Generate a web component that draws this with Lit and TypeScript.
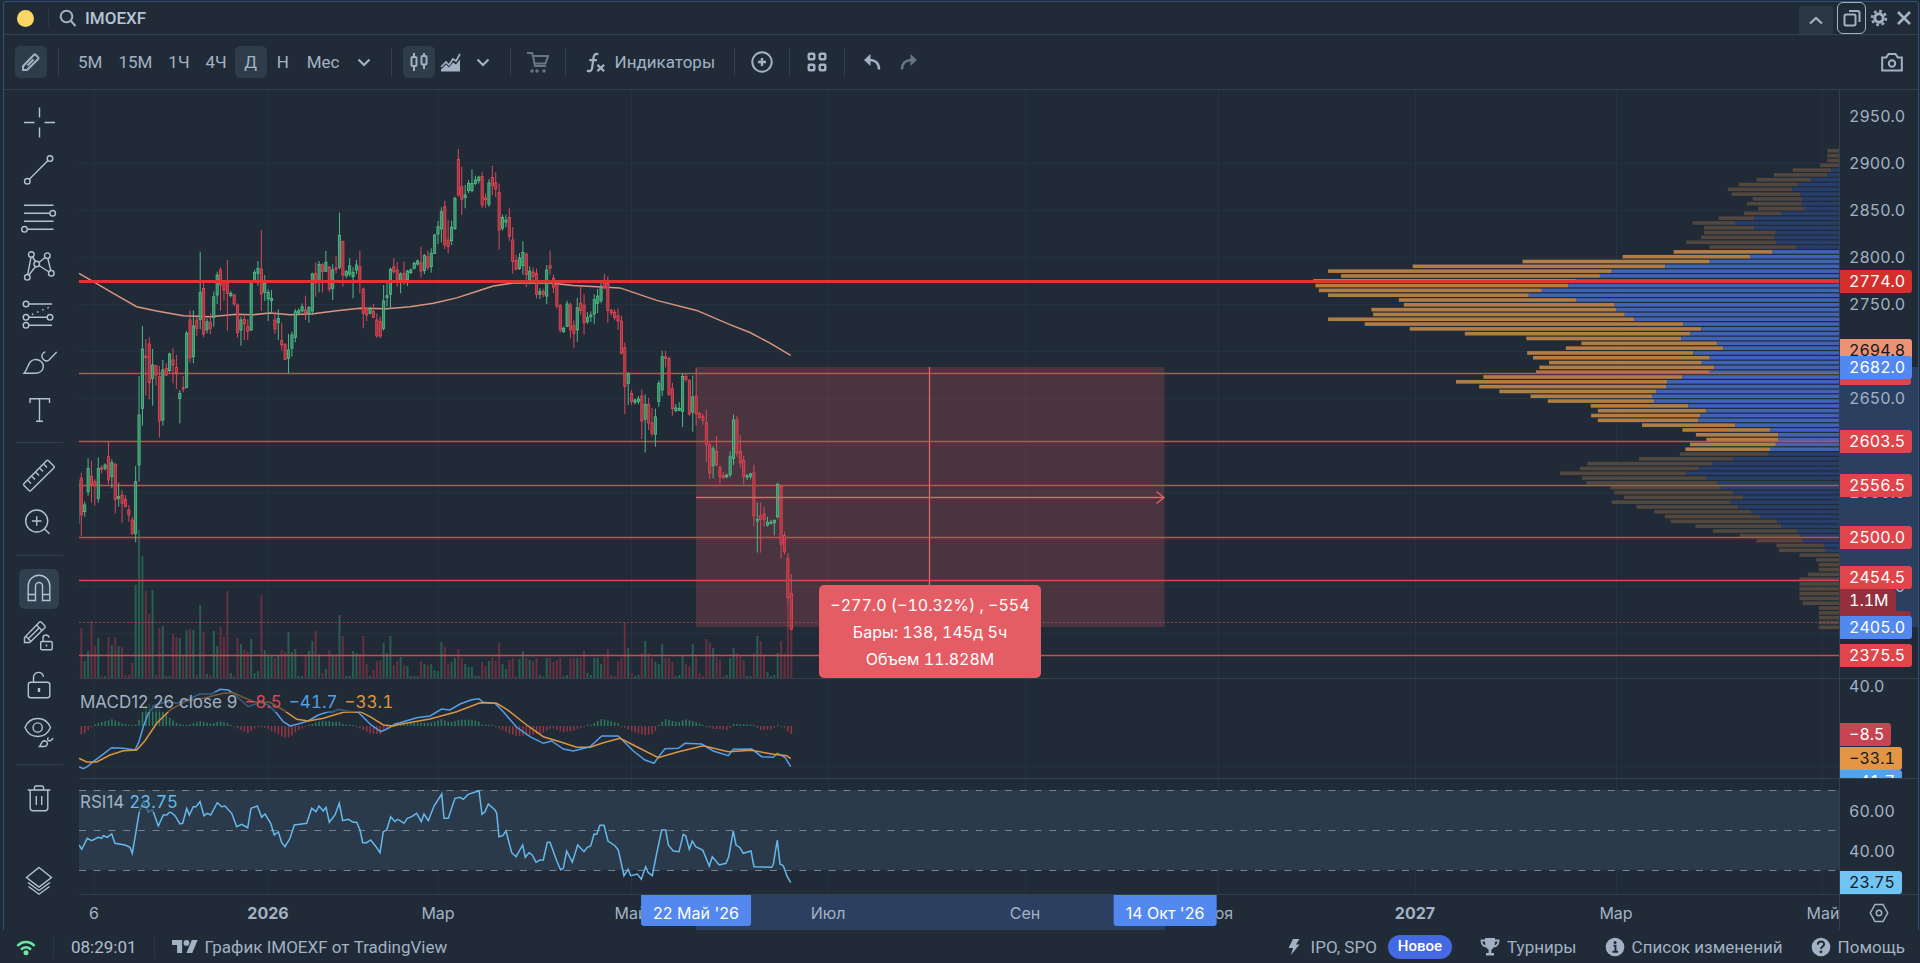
import { LitElement, html, svg, css, nothing } from "lit";
import { customElement } from "lit/decorators.js";

type Pt = [number, number];

/* Geometry of the plot: design-space origin and size of each pane. */
const PLOT_X = 79;
const PLOT_W = 1760;
const PRICE_Y = 90;
const PRICE_H = 588;
const MACD_Y = 679;
const MACD_H = 99;
const RSI_Y = 779;
const RSI_H = 115;
const BAR_STEP = 3.397;
const FIRST_BAR = 81.3;
const BASE_Y = 130;

const barX = (i: number) => FIRST_BAR + BAR_STEP * i;

/* wick top, wick bottom, body top, body bottom, direction; thirds of a pixel below BASE_Y */
const EARLY = `1050,1185,1052,1180,g 1028,1218,1045,1155,r 1115,1160,1125,1145,g 985,1097,1015,1085,g 992,1118,1038,1065,r
1048,1127,1055,1068,r 982,1118,1015,1105,g 1005,1030,1013,1018,r 1000,1022,1005,1015,g 935,1062,980,1050,r 988,1075,998,1040,g
998,1150,1003,1108,r 1058,1130,1100,1105,g 1080,1178,1095,1120,r 1095,1132,1108,1130,r 1125,1175,1140,1155,r 1160,1215,1170,1210,r
1008,1237,1055,1210,g 738,1055,855,1005,g 588,887,657,835,g 627,797,678,683,r 622,808,642,758,r 657,827,705,745,g 705,767,707,735,r
708,922,740,873,r 690,887,720,870,g 700,738,715,735,r 668,727,672,722,g 655,760,690,706,r 675,777,712,728,r 780,880,790,806,g
738,787,773,777,r 603,775,610,772,g 541,698,570,683,r 541,700,588,680,g 560,618,570,595,r 365,598,487,568,g 452,622,475,612,r
565,610,575,600,g 550,612,578,595,r 485,590,500,563,g 425,522,435,495,g 412,542,420,465,r 450,512,455,480,r 390,602,458,490,r
483,502,490,497,g 492,528,495,522,r 520,623,525,608,r 560,647,570,600,g 553,630,568,582,r 568,630,590,604,r 450,603,457,600,g
420,455,427,452,g 393,467,415,430,g 300,543,417,492,r 435,513,460,487,g 478,573,487,507,g 480,547,505,512,g 545,612,570,597,r
538,630,565,578,g 578,662,632,645,r 640,690,643,688,r 612,730,660,685,g 605,680,615,655,g 537,637,545,622,g 535,553,542,548,g
520,548,530,543,g 497,570,540,548,r 528,578,533,550,g 428,555,432,543,g 397,500,430,458,r 393,487,403,455,g 400,487,404,425,r
363,425,397,424,g 407,485,412,477,r 403,510,420,475,g 378,430,414,418,r 248,418,316,412,g 332,470,334,435,r 420,445,425,437,g
384,440,408,432,g 412,505,427,440,g 390,432,405,420,g 363,490,410,458,r 473,595,477,550,r 532,573,536,555,r 530,553,535,550,g
522,565,545,562,r 550,623,570,618,r 560,625,575,618,r 465,602,513,595,g 455,530,497,503,g 413,537,418,493,g 384,432,410,425,r
397,470,420,455,r 427,490,432,458,g 395,465,430,450,r 420,468,423,450,g 415,432,420,428,g 395,418,400,415,g 388,407,393,402,g
350,443,398,423,r 372,432,377,422,g 362,420,380,412,r 355,428,370,410,g 312,372,315,370,g 273,342,290,312,g 232,337,245,297,g
212,357,230,345,r 270,370,330,350,r 272,345,292,332,g 200,300,205,295,g 57,200,88,195,r 110,255,170,208,r 165,235,195,203,g
150,190,160,182,g`;

/* same fields, 1/2.8 of a pixel below BASE_Y */
const LATE = `110,175,150,170,g 128,155,140,150,g 128,150,132,142,g 118,218,130,210,r 178,218,190,195,r 138,215,148,208,g
100,183,133,155,r 118,188,148,165,r 150,335,175,280,r 237,282,245,275,g 237,272,252,258,g 218,310,245,298,r 272,402,308,368,r
350,393,365,390,r 345,392,358,388,g 312,405,343,380,g 343,440,348,405,r 382,432,395,422,g 385,428,398,410,r 388,472,402,460,r
443,473,452,460,g 445,468,453,460,r 378,488,392,465,g 338,405,380,387,r 405,457,415,440,r 428,500,432,493,r 487,567,492,560,r
550,568,555,565,g 478,552,487,550,g 483,583,490,560,r 533,610,548,570,r 470,593,498,560,g 437,517,485,505,r 460,573,490,540,r
510,543,525,537,g 508,538,518,523,g 460,543,475,515,g 445,513,465,485,g 428,485,440,478,g 403,445,425,443,r 410,540,430,505,r
500,520,505,512,r 502,533,510,525,r 500,560,520,535,r 520,628,535,625,r 595,795,610,718,r 678,770,683,710,g 728,770,738,760,r
752,768,756,763,g 745,768,753,760,g 727,865,745,815,r 740,903,768,810,g 750,840,768,820,r 778,858,820,850,r 780,887,803,852,g
702,775,710,760,g 618,745,635,728,g 618,665,635,640,r 635,745,640,740,r 708,800,725,780,r 767,790,778,785,g 762,787,780,785,g
682,832,690,788,g 683,705,690,698,r 697,800,702,795,r 688,845,747,790,g 665,828,745,795,r 790,807,793,805,r 795,825,803,812,r
783,930,820,880,r 875,977,882,960,r 885,975,893,940,g 857,943,900,937,r 938,990,945,970,r 958,977,968,973,r 962,975,966,971,g
900,972,915,965,g 797,938,812,920,g 800,915,812,905,r 855,945,900,932,r 912,992,925,970,r 963,980,968,972,g 960,978,963,970,g
937,1110,960,1080,r 1043,1183,1090,1095,g 1043,1183,1080,1090,r 1055,1110,1075,1090,r 1083,1110,1098,1107,g 1092,1105,1098,1102,g
1090,1135,1093,1100,g 988,1088,992,1083,g 993,1200,998,1160,r 1125,1188,1135,1180,r 1185,1330,1200,1310,r 1243,1400,1298,1398,r`;

interface Candle { x: number; hi: number; lo: number; top: number; bottom: number; up: boolean }

const parse = (block: string, unit: number, first: number): Candle[] =>
  block.split(/\s+/).map((row, k) => {
    const f = row.split(",");
    const [hi, lo, top, bottom] = f.slice(0, 4).map((v) => BASE_Y + Number(v) / unit);
    return { x: barX(first + k), hi, lo, top, bottom, up: f[4] === "g" };
  });

const CANDLES: Candle[] = [...parse(EARLY, 3, -1), ...parse(LATE, 2.8, 115)];

const VOLUME = [
  50, 50, 17, 27, 57, 32, 40, 2, 2, 41, 33, 41, 32, 31, 3, 3, 15, 93, 148, 122, 87, 64, 88, 3, 50, 52, 2, 2, 44, 41, 40, 22,
  48, 49, 48, 3, 73, 46, 4, 3, 47, 32, 51, 41, 87, 5, 2, 40, 34, 28, 26, 39, 5, 7, 83, 28, 23, 22, 20, 22, 28, 26, 46, 26, 29,
  2, 2, 22, 27, 37, 47, 24, 5, 9, 28, 22, 22, 63, 42, 2, 2, 27, 25, 24, 42, 14, 2, 8, 17, 18, 35, 25, 42, 13, 17, 21, 13, 12,
  2, 2, 2, 17, 14, 13, 14, 8, 7, 36, 31, 14, 16, 20, 29, 20, 14, 11, 11, 2, 2, 16, 12, 17, 20, 17, 35, 14, 9, 18, 20, 2, 19,
  27, 20, 18, 17, 20, 3, 2, 20, 20, 16, 18, 20, 2, 3, 20, 20, 20, 20, 27, 5, 3, 20, 20, 14, 21, 29, 3, 2, 17, 20, 55, 30, 5,
  2, 3, 25, 37, 25, 20, 16, 14, 34, 20, 20, 16, 2, 3, 23, 14, 12, 34, 21, 5, 2, 39, 35, 30, 21, 18, 2, 3, 20, 30, 25, 23, 18,
  2, 2, 25, 42, 37, 23, 6, 2, 3, 25, 37, 25, 73, 84,
];

/* Turns "x,y x,y" pairs into page-space points. */
const pts = (s: string, x0: number, ux: number, y0: number, uy: number): Pt[] =>
  s.trim().split(/\s+/).map((p) => {
    const [x, y] = p.split(",").map(Number);
    return [x0 + x / ux, y0 + y / uy];
  });
const join = (p: Pt[]) => p.map(([x, y]) => `${x.toFixed(1)},${y.toFixed(1)}`).join(" ");

const MA_LINE: Pt[] = [
  ...pts("27,430 75,458 130,490 200,530 260,543 340,557 420,560 500,553 550,554 600,549 660,554 730,551 800,542 870,535 950,536 1020,530 1090,520", 70, 3, 130, 3),
  ...pts("0,481 50,470 100,455 160,437 220,428 330,428 400,435 540,442 650,477 770,505 870,545 930,567 990,597 1052,631", 440, 3, 130, 2.8),
];
const MACD_LINE: Pt[] = [
  ...pts("237,650 250,656 262,650 280,635 300,620 335,593 370,595 405,600 417,575 430,530 445,490 465,465 500,455 530,460 560,450 600,432 635,432 660,418 685,420 700,430 745,470 780,457 805,465 830,490 850,515 870,528 895,522 925,512 955,495 985,485 1000,485 1015,478 1040,483 1075,487 1110,522 1142,545 1165,535 1185,522", 0, 3, 550, 3),
  ...pts("0,158 50,143 90,138 125,117 150,120 180,102 215,89 237,86 250,97 285,100 310,125 350,172 390,200 430,220 455,213 490,237 520,243 570,230 605,198 655,198 700,243 735,270 762,280 780,255 795,236 835,235 855,220 905,222 940,243 985,257 1000,238 1055,237 1085,260 1120,262 1132,250 1155,262 1172,290", 400, 3, 670, 3),
];
const SIGNAL_LINE: Pt[] = [
  ...pts("237,625 260,636 290,636 330,615 370,602 410,600 435,572 470,520 510,480 560,452 610,445 670,430 700,428 760,455 810,457 850,480 890,508 925,513 970,505 1030,487 1080,485 1110,500 1150,525 1180,528", 0, 3, 550, 3),
  ...pts("0,163 90,147 170,125 240,98 290,100 320,118 380,165 430,200 480,215 530,232 570,232 610,218 660,205 700,225 775,263 830,247 910,227 985,245 1055,241 1120,253 1160,257 1172,266", 400, 3, 670, 3),
];
const RSI_LINE: Pt[] = [
  ...pts("237,885 245,898 262,865 275,872 295,862 305,865 310,857 322,862 335,852 345,880 375,885 390,892 397,910 407,850 418,785 430,755 445,785 458,780 475,828 490,795 500,795 510,785 525,797 540,822 548,820 560,775 568,795 580,770 588,770 600,755 612,797 622,790 632,795 652,758 665,770 675,768 695,790 710,830 725,823 743,833 753,775 772,768 785,802 795,792 812,820 823,855 835,845 845,878 855,890 870,865 883,825 905,822 920,820 935,775 948,785 957,768 970,783 978,772 988,817 1005,795 1018,760 1028,812 1045,808 1060,817 1070,817 1080,840 1088,878 1100,878 1112,870 1128,890 1140,908 1150,845 1160,840 1172,800 1185,815 1192,808", 0, 3, 550, 3),
  ...pts("0,452 12,460 22,445 35,440 50,430 64,455 72,432 85,452 102,408 125,372 132,445 145,445 165,385 180,382 190,388 205,373 237,362 246,433 255,425 265,402 285,420 290,430 297,500 308,497 318,483 335,548 348,560 368,525 376,562 387,548 397,555 408,577 420,570 430,570 442,517 450,517 470,572 482,600 490,595 500,543 517,577 533,525 552,545 562,532 572,528 582,493 590,493 600,466 612,466 624,513 645,527 655,540 672,617 684,598 692,617 712,612 724,628 737,590 745,608 757,617 770,550 785,480 797,480 805,525 820,543 837,545 850,493 857,497 868,538 877,513 887,530 908,540 928,588 937,560 958,585 978,580 986,560 1000,483 1008,525 1020,533 1030,550 1053,543 1062,590 1115,592 1120,583 1132,510 1140,582 1150,587 1162,620 1172,638", 400, 3, 670, 3),
];

const at = (line: Pt[], x: number): number => {
  for (let i = 1; i < line.length; i++) {
    const [x1, y1] = line[i];
    if (x <= x1) {
      const [x0, y0] = line[i - 1];
      return y0 + ((y1 - y0) * (x - x0)) / (x1 - x0 || 1);
    }
  }
  return line[line.length - 1][1];
};

/* Volume profile rows: total length and buy part, in units of 1/2.376 px from the right edge. */
const PROFILE: Pt[] = [
  [28, 0], [28, 0], [28, 0], [45, 0], [110, 18], [155, 28], [196, 66], [238, 96], [264, 111], [255, 92], [205, 88], [219, 90],
  [192, 81], [226, 136], [286, 201], [348, 246], [321, 201], [321, 150], [328, 154], [363, 150], [308, 101], [393, 159],
  [514, 211], [752, 307], [1013, 413], [1214, 540], [1183, 568], [1249, 625], [1244, 643], [1236, 706], [1214, 737],
  [1046, 625], [1034, 533], [1111, 529], [1107, 509], [1214, 487], [1127, 370], [1020, 328], [889, 353], [743, 375],
  [612, 290], [649, 275], [741, 346], [727, 307], [689, 326], [712, 296], [720, 307], [845, 372], [910, 408], [855, 411],
  [807, 434], [733, 444], [692, 439], [590, 358], [573, 315], [589, 329], [573, 334], [468, 246], [372, 164], [340, 144],
  [315, 144], [354, 150], [365, 164], [378, 169], [475, 252], [598, 301], [616, 331], [663, 363], [611, 316], [600, 288],
  [543, 281], [534, 251], [511, 228], [540, 259], [481, 239], [439, 208], [414, 188], [400, 146], [341, 136], [300, 99],
  [236, 91], [196, 86], [149, 36], [143, 31], [94, 0], [54, 0], [48, 0], [48, 0], [74, 0], [94, 0], [94, 0], [94, 0], [94, 0],
  [94, 0], [86, 0], [48, 0], [48, 0], [48, 0], [48, 0], [48, 0],
];

const GRID_X = [94, 268, 438, 631, 828, 1025, 1218, 1415, 1616, 1822];
const GRID_Y = [163, 210, 257, 304, 351, 398, 445, 492, 539, 586, 633];
const LEVELS = [373, 441, 485, 537, 580, 655];

interface Tag { y: number; text: string; kind: string }
const TICKS: Tag[] = [
  [116, "2950.0"], [163, "2900.0"], [210, "2850.0"], [257, "2800.0"], [304, "2750.0"], [398, "2650.0"], [492, "2550.0"], [586, "2450.0"],
].map(([y, text]) => ({ y: y as number, text: text as string, kind: "tick" }));
const PRICE_TAGS: Tag[] = [
  { y: 281, text: "2774.0", kind: "crimson" },
  { y: 350, text: "2694.8", kind: "salmon" },
  { y: 373, text: "", kind: "red slip" },
  { y: 367, text: "2682.0", kind: "blue" },
  { y: 441, text: "2603.5", kind: "red" },
  { y: 485, text: "2556.5", kind: "red" },
  { y: 537, text: "2500.0", kind: "red" },
  { y: 577, text: "2454.5", kind: "red" },
  { y: 622, text: "", kind: "maroon slip" },
  { y: 600, text: "1.1M", kind: "maroon" },
  { y: 627, text: "2405.0", kind: "blue" },
  { y: 655, text: "2375.5", kind: "red" },
];
const MACD_TAGS: Tag[] = [
  { y: 686, text: "40.0", kind: "tick" },
  { y: 734, text: "−8.5", kind: "brick" },
  { y: 781, text: "−41.7", kind: "azure" },
  { y: 758, text: "−33.1", kind: "orange" },
];
const RSI_TAGS: Tag[] = [
  { y: 811, text: "60.00", kind: "tick" },
  { y: 851, text: "40.00", kind: "tick" },
  { y: 882, text: "23.75", kind: "sky" },
];

const TIMES: { x: number; text: string; bold?: boolean; chip?: boolean }[] = [
  { x: 94, text: "6" },
  { x: 268, text: "2026", bold: true },
  { x: 438, text: "Мар" },
  { x: 631, text: "Май" },
  { x: 828, text: "Июл" },
  { x: 1025, text: "Сен" },
  { x: 1218, text: "Ноя" },
  { x: 1415, text: "2027", bold: true },
  { x: 1616, text: "Мар" },
  { x: 1823, text: "Май" },
  { x: 696, text: "22 Май '26", chip: true },
  { x: 1165, text: "14 Окт '26", chip: true },
];

const pct = (v: number, from: number, size: number) => `${(((v - from) / size) * 100).toFixed(3)}%`;

/* ---------- icons ---------- */

const tool = (body: unknown) => html`<svg class="ic40" viewBox="0 0 40 40" aria-hidden="true">${body}</svg>`;
const ring = (x: number, y: number) => svg`<circle cx=${x} cy=${y} r="2.8"/>`;

const T = {
  cross: svg`<path d="M20.5 4.5v10M20.5 24.5v10M5 19.5h10.5M25.5 19.5H36"/>`,
  line: svg`<path d="M10.3 28.3 29 9.6"/>${ring(31, 7.6)}${ring(8.3, 30.3)}`,
  fib: svg`<path d="M5 6.3h29.5M5 14.3h26M5 22.3h29.5M8.5 30.3h26"/>${ring(33.7, 14.3)}${ring(5.5, 30.3)}`,
  pattern: svg`<path d="M12 10.2 8.7 27.5M13.5 10l3 4.5M20 15.5l6-5M28.8 11.5l3 12M20 18.5l10 6.5M16.5 19.5l-6.5 8.5"/>
    ${ring(12.3, 7.5)}${ring(28.3, 8.7)}${ring(17.7, 17)}${ring(32.3, 26.3)}${ring(8.3, 30.3)}`,
  forecast: svg`<path d="M10 9h23M10 22.3h18M10 30.3h23"/><path d="M13 19.5 33 11" stroke-dasharray="1.4 4.2" stroke-width="1.6"/>
    ${ring(7, 9)}${ring(7, 22.3)}${ring(31, 22.3)}${ring(7, 30.3)}`,
  brush: svg`<path d="M5 30.3C9.500 26 8.500 17.500 15.500 16.600c5-.5 9 2.500 8.800 7-.2 4.200-3.800 6.700-8.300 6.700z"/>
    <path d="M26.300 8.700c-4 2-4.600 5.600-1.600 8 1.800 1.600 3.800 1.600 5.300.3l7.700-8"/>`,
  text: svg`<path d="M11 12V7.700h19.500V12M20.500 7.700v22.500M17 30.300h7"/>`,
  ruler: svg`<path d="M5 27.500 27.500 4.800q1-1 2 0l5.300 5.200q1 1 0 2L12 34.500q-1 1-2 0L5 29.500q-1-1 0-2zM9 24.500l3 3M13 20.500l3 3M17 16.500l3 3M21 12.500l3 3M25 8.500l3 3"/>`,
  zoom: svg`<circle cx="17.700" cy="17" r="11"/><path d="m25.500 25 5 4.800M17.700 12.200v9.600M12.900 17h9.600"/>`,
  magnet: svg`<path d="M9.200 31.500V17a10.800 10.800 0 0 1 21.600 0v14.500h-7.300V17a3.500 3.500 0 0 0-7 0v14.500zM9.200 25.500h7.300M23.500 25.500h7.300"/>`,
  pencilLock: svg`<path d="M5.500 25.500v-5L20.300 5.300q1-1 2 0l3.500 3.500q1 1 0 2L10.800 25.500zM7 19.500l5 5M17.500 8l5.500 5.500M9.500 21.500 20 11"/>
    <rect x="21.700" y="24.500" width="11.500" height="8.300" rx="1.200"/><path d="M24 24.500v-3.200a3 3 0 0 1 6-.6M27.500 27.500v2"/>`,
  lock: svg`<rect x="9.300" y="17.300" width="21.500" height="15.400" rx="2.500"/><path d="M14.500 17.300v-4.500a5 5 0 0 1 10-.8"/><path d="M20 23v4" stroke-width="2.400"/>`,
  eye: svg`<path d="M6 14.500C11 2.500 26.500 2.500 31.500 14.500 26.500 26.500 11 26.500 6 14.500z"/><circle cx="18.700" cy="14.500" r="4.600"/>
    <path d="M20.500 33.500c2-2 1.500-5.500 4.500-5.700 2.500 0 3.700 1.500 3.300 3.300-.4 1.600-1.600 2.400-3.300 2.400zM29.500 24.500c-1.500 1.300-1 3.300.8 3.500 1.500 0 2.500-1.300 4-2.700"/>`,
  trash: svg`<path d="M8.700 12h22.600M15.500 12V9.500q0-1.500 1.500-1.500h6q1.500 0 1.500 1.500V12M11.200 12v18q0 2.700 2.700 2.700h12.200q2.700 0 2.700-2.700V12M17.300 18v9M22.700 18v9"/>`,
  layers: svg`<path d="m20 6.500 12.500 10L20 26 7.500 16.500zM9 21.500l11 8 11-8M9.500 25.500l10.500 7.700 10.500-7.700"/>`,
};

const I = {
  search: html`<svg class="ic18" viewBox="0 0 18 18"><circle cx="7.500" cy="7.500" r="5.800"/><path d="m12 12 4.500 5"/></svg>`,
  pencil: html`<svg class="ic20" viewBox="0 0 20 20"><path d="M2 18v-3.800L13 2.800q.8-.8 1.600 0l2.600 2.600q.8.800 0 1.600L6 18zM6.500 13.500l6-6"/></svg>`,
  down: html`<svg class="ic16" viewBox="0 0 16 16"><path d="m2.500 5.500 5.500 5.500 5.500-5.500" stroke-width="2.200"/></svg>`,
  up: html`<svg class="ic16" viewBox="0 0 16 16"><path d="M2 11.500 8 6l6 5.500" stroke-width="2.200"/></svg>`,
  candles: html`<svg class="ic20" viewBox="0 0 20 20"><path d="M5 1v4M5 14v5M15 1v3M15 12v5"/><rect x="2.500" y="5" width="5" height="9" rx="1"/><rect x="12.500" y="4" width="5" height="8.500" rx="1"/></svg>`,
  area: html`<svg class="ic21" viewBox="0 0 21 20"><path class="fill" d="M1 19v-2l5-5 3 3 4-5 3 2 4-5v12z"/><path d="m1 14.500 5-5 3 3 4-6 3 2 4-7" stroke-width="1.700"/></svg>`,
  cart: html`<svg class="ic22" viewBox="0 0 22 22"><path d="M0 2h5l1 3 2 10h11M6 5h15l-2.500 7.500H7.500"/><circle class="fill" cx="5" cy="20" r="1.700"/><circle class="fill" cx="10" cy="20" r="1.700"/><circle class="fill" cx="17" cy="20" r="1.700"/></svg>`,
  fx: html`<svg class="ic21" viewBox="0 0 21 22"><path d="M13.500 2.300C9.800 1 8.700 3.500 8.300 6.500L7 16.500c-.4 3-2 4.300-5.500 3M4 8.500h8" stroke-width="2.300"/><path d="m12.500 13.500 7 6.500M19.500 13.500l-7 6.500" stroke-width="2.300"/></svg>`,
  plus: html`<svg class="ic22" viewBox="0 0 22 22"><circle cx="11" cy="11" r="9.700"/><path d="M11 7v8M7 11h8" stroke-width="2.400"/></svg>`,
  grid: html`<svg class="ic20" viewBox="0 0 20 20"><g stroke-width="2.400"><rect x="1.700" y="1.700" width="5.600" height="5.600" rx="1"/><rect x="12.700" y="1.700" width="5.600" height="5.600" rx="1"/><rect x="1.700" y="12.700" width="5.600" height="5.600" rx="1"/><rect x="12.700" y="12.700" width="5.600" height="5.600" rx="1"/></g></svg>`,
  undo: html`<svg class="ic18" viewBox="0 0 18 18"><path class="fill" d="M1 7 7.500 1v12z"/><path d="M6 7c6-.5 10 3 10 9.500" stroke-width="2.500"/></svg>`,
  redo: html`<svg class="ic18" viewBox="0 0 18 18"><path class="fill" d="m17 7-6.500-6v12z"/><path d="M12 7C6 6.500 2 10 2 16.500" stroke-width="2.500"/></svg>`,
  camera: html`<svg class="ic22" viewBox="0 0 22 20"><path d="M1.200 5.500h4L7.500 2h7l2.300 3.500h4V18.500H1.200z"/><circle cx="11" cy="11.500" r="3.200"/></svg>`,
  windows: html`<svg class="ic18" viewBox="0 0 18 18"><rect x="1.500" y="5.500" width="11" height="11" rx="1.500"/><path d="M6 2h8.500q2 0 2 2v9"/></svg>`,
  gear: html`<svg class="ic18" viewBox="0 0 18 18"><circle cx="9" cy="9" r="4.200" stroke-width="3"/><circle cx="9" cy="9" r="7" stroke-width="2.400" stroke-dasharray="2.750 2.750"/></svg>`,
  close: html`<svg class="ic16" viewBox="0 0 16 16"><path d="m2 2 12 12M14 2 2 14" stroke-width="2.600"/></svg>`,
  hex: html`<svg class="ic20 thin" viewBox="0 0 20 20"><path d="M6 1.500h8l4.700 8.500L14 18.500H6L1.300 10z"/><circle cx="10" cy="10" r="2.700"/></svg>`,
  wifi: html`<svg class="ic20 green" viewBox="0 0 20 20"><path d="M1.500 9C6 3.700 14 3.700 18.500 9M5 12.700c2.800-3.200 7.200-3.200 10 0" stroke-width="2.600"/><circle class="fill" cx="10" cy="15.800" r="2.500"/></svg>`,
  tv: html`<svg class="tv" viewBox="0 4 36 18"><path class="fill" d="M14 22H7V11H0V4h14v18zM28 22h-8l7.500-18h8L28 22z"/><circle class="fill" cx="20" cy="8" r="4"/></svg>`,
  bolt: html`<svg class="bolt" viewBox="0 0 12 16"><path class="fill" d="M5 0h6.500L8 5.500h3.500L3 16l2-7H.5z"/></svg>`,
  cup: html`<svg class="ic20" viewBox="0 0 20 20"><path class="fill" d="M5 1h10v4c0 4-1.500 6.500-3.600 7.500V16H14v2.500H6V16h2.600v-3.500C6.500 11.500 5 9 5 5z"/><path d="M5 3.500H1.500C1.500 7 3 9 6 9.500M15 3.500h3.500C18.500 7 17 9 14 9.500" stroke-width="1.800"/></svg>`,
  info: html`<svg class="ic20" viewBox="0 0 20 20"><circle class="fill" cx="10" cy="10" r="9.300"/><path class="dark" d="M8.500 8.700h2v5.800M7.500 14.700h5.500" stroke-width="1.900"/><circle class="hole" cx="10" cy="5.500" r="1.500"/></svg>`,
  help: html`<svg class="ic20" viewBox="0 0 20 20"><circle class="fill" cx="10" cy="10" r="9.300"/><path class="dark" d="M6.800 7.600c.2-4.200 6.600-3.900 6.300-.2-.2 2.200-3 2.200-3 4.600" stroke-width="2"/><circle class="hole" cx="10" cy="14.800" r="1.400"/></svg>`,
};

@customElement("app-root")
export class AppRoot extends LitElement {
  static styles = css`
    :host {
      --bg: #202b37;
      --line: #34414d;
      --text: #a2b2c4;
      display: flex;
      flex-direction: column;
      height: 100vh;
      min-height: 600px;
      box-sizing: border-box;
      overflow: hidden;
      background: var(--bg);
      color: var(--text);
      font: 400 16px/20px Inter, "Liberation Sans", sans-serif;
    }
    * { box-sizing: border-box; }
    button {
      font: inherit;
      color: inherit;
      background: none;
      border: 0;
      padding: 0;
      margin: 0;
      display: inline-flex;
      align-items: center;
      justify-content: center;
      cursor: pointer;
    }
    a { color: inherit; text-decoration: none; display: inline-flex; align-items: center; gap: 7px; }
    svg { display: block; fill: none; stroke: currentColor; stroke-width: 2; flex: none; }
    .fill { fill: currentColor; stroke: none; }
    .dark { stroke: var(--bg); }
    .hole { fill: var(--bg); stroke: none; }
    .ic16 { width: 16px; height: 16px; }
    .ic18 { width: 18px; height: 18px; }
    .ic20 { width: 20px; height: 20px; }
    .ic21 { width: 21px; height: 21px; }
    .ic22 { width: 22px; height: 22px; }
    .ic40 { width: 40px; height: 40px; stroke-width: 1.4; }
    .thin { stroke-width: 1.500; }
    .green { color: #6ee7a0; }
    .tv { width: 26px; height: 13px; }
    .bolt { width: 12px; height: 16px; }

    .window {
      flex: 1;
      min-height: 0;
      margin: 1px 1px 0 3px;
      border: 1px solid #30507f;
      border-bottom: 0;
      border-radius: 4px 4px 0 0;
      display: flex;
      flex-direction: column;
    }
    .head, .toolbar, .status { font-family: Roboto, "Liberation Sans", sans-serif; font-size: 17px; }
    .head {
      height: 33px;
      flex: none;
      border-bottom: 1px solid var(--line);
      display: flex;
      align-items: center;
      padding: 0 2px 0 13px;
    }
    .dot { width: 17px; height: 17px; border-radius: 50%; background: #fbd566; }
    .head .rule { width: 1px; height: 20px; background: #293541; margin: 0 10px 0 14px; }
    .symbol { gap: 8px; font-weight: 500; color: #b7c5d4; }
    .symbol svg { color: var(--text); }
    .winbtns { margin-left: auto; display: flex; align-items: center; height: 100%; }
    .tab { width: 34px; height: 28px; align-self: flex-end; background: #2b3844; border-radius: 3px 3px 0 0; }
    .framed { width: 29px; height: 32px; border: 1px solid #a2b2c4; border-radius: 6px; margin: 0 0 0 4px; }
    .winbtns .plain { width: 25px; height: 28px; }

    .toolbar {
      height: 55px;
      flex: none;
      border-bottom: 1px solid var(--line);
      display: flex;
      align-items: center;
      padding: 0 10px 0 11px;
    }
    .toolbar button { height: 32px; min-width: 32px; border-radius: 5px; }
    .toolbar .txt { padding: 0 8px; }
    .toolbar .on { background: #2f3c49; }
    .toolbar .sq { width: 32px; }
    .toolbar .dim { opacity: 0.55; }
    .toolbar .fx { gap: 9px; padding: 0 8px; }
    .toolbar .gap { margin-left: 5px; }
    .toolbar .last { margin-left: auto; }
    .sep { width: 1px; height: 28px; background: var(--line); margin: 0 11px; }

    .main {
      flex: 1;
      min-height: 0;
      display: grid;
      grid-template-columns: 75px minmax(0, 1fr) 79px;
      grid-template-rows: minmax(0, 589fr) minmax(0, 100fr) minmax(0, 116fr) 35px;
    }
    .tools {
      grid-row: 1 / 5;
      display: flex;
      flex-direction: column;
      align-items: center;
      padding: 9px 5px 25px 0;
      color: #b3c2d2;
      overflow: hidden;
    }
    .tools button { width: 40px; height: 40px; margin: 4px 0; border-radius: 6px; flex: none; }
    .tools .on { background: #31404e; }
    .tools hr { width: 47px; height: 1px; border: 0; background: var(--line); margin: 7px 0 9px; flex: none; }
    .tools .bottom { margin-top: auto; }

    .pane { position: relative; border-bottom: 1px solid var(--line); min-width: 0; }
    .pane > svg { width: 100%; height: 100%; stroke-width: 1; overflow: hidden; }
    .pane, .axis { font-variant-numeric: tabular-nums; }
    .axis { position: relative; border-left: 1px solid var(--line); border-bottom: 1px solid var(--line); overflow: hidden; }
    .axis .range { position: absolute; left: 0; right: 0; background: #2b3f61; }
    .tag {
      position: absolute;
      left: 0;
      height: 23px;
      line-height: 22px;
      margin-top: -11px;
      padding: 0 7px 0 9px;
      border-radius: 0 3px 3px 0;
      color: #fff;
      white-space: nowrap;
    }
    .slip { width: 71px; }
    .tick { color: var(--text); }
    .crimson { background: #d3302c; }
    .red { background: #df464b; }
    .blue { background: #5389ef; }
    .salmon { background: #ed9273; color: #14191f; }
    .maroon { background: #94303c; }
    .brick { background: #c74450; }
    .orange { background: #e39544; color: #14191f; }
    .azure { background: #55a3e4; }
    .sky { background: #70c4f4; color: #14191f; }

    .grid { stroke: #26323e; }
    .gup { stroke: #4db887; }
    .gdn { stroke: #d9485a; }
    .bup { fill: #348c64; stroke: #55c08a; stroke-width: 0.8; }
    .bdn { fill: #a8323f; stroke: #e24b57; stroke-width: 0.8; }
    .vup { fill: #295d50; }
    .vdn { fill: #66303f; }
    .shape { stroke: none; }
    .level { stroke: #d4484f; stroke-width: 1.600; }
    .poc { stroke: #dc3831; stroke-width: 3; }
    .last-price { stroke: #c4405a; stroke-dasharray: 2 2; opacity: 0.8; }
    .ma { stroke: #d99480; stroke-width: 1.500; }
    .buy { fill: #4163b4; }
    .sell { fill: #b17d47; }
    .faded .buy { fill: #283e6a; }
    .faded .sell { fill: #51473e; }
    .measure { fill: #ee5a62; fill-opacity: 0.2; stroke: none; }
    .mline { stroke: #e4626a; stroke-width: 1.300; }
    .macd { stroke: #559fe8; stroke-width: 1.500; }
    .signal { stroke: #dd9440; stroke-width: 1.500; }
    .rsi { stroke: #67b8ea; stroke-width: 1.500; }
    .band { fill: #2a3a4a; stroke: none; }
    .dash { stroke: #75828f; stroke-dasharray: 7 7.700; }

    .legend {
      position: absolute;
      left: 0;
      top: 13px;
      padding: 0 2px 0 1px;
      display: flex;
      gap: 7px;
      font-size: 17px;
      white-space: nowrap;
      background: rgba(32, 43, 55, 0.55);
    }
    .rsi-legend { gap: 5px; background: rgba(42, 58, 74, 0.6); }
    .name { font-variant-numeric: normal; }
    .c-red { color: #d9485a; }
    .c-blue { color: #559fe8; }
    .c-orange { color: #dd9440; }
    .c-sky { color: #67b8ea; }

    .bubble {
      position: absolute;
      transform: translateX(-50%);
      width: 222px;
      padding: 7px 0 5px;
      border-radius: 5px;
      background: #e45d65;
      color: #fff;
      text-align: center;
      line-height: 27px;
      white-space: nowrap;
      z-index: 2;
    }

    .times { position: relative; overflow: hidden; }
    .times .span { position: absolute; top: 0; bottom: 0; background: #2b3f61; }
    .time { position: absolute; top: 0; line-height: 36px; transform: translateX(-50%); white-space: nowrap; }
    .bold { font-weight: 700; }
    .chip { height: 31px; background: #5389ef; color: #fff; padding: 0 12px; border-radius: 0 0 3px 3px; }
    .corner { border-left: 1px solid var(--line); display: flex; align-items: center; justify-content: center; }

    .status {
      height: 33px;
      flex: none;
      display: flex;
      align-items: center;
      padding: 0 15px 0 16px;
      white-space: nowrap;
    }
    .status .rule { width: 1px; height: 22px; background: #2b3743; margin: 0 17px; }
    .status .right { margin-left: auto; display: flex; align-items: center; gap: 28px; }
    .status .ipo { gap: 11px; }
    .pill {
      height: 24px;
      line-height: 23px;
      padding: 0 10px;
      border-radius: 12px;
      background: #4569e2;
      color: #fff;
      font-size: 15px;
      font-weight: 500;
    }
    .clock { color: #b0bfce; }
  `;

  private priceSvg() {
    return html`<svg viewBox="${PLOT_X} ${PRICE_Y} ${PLOT_W} ${PRICE_H}" preserveAspectRatio="none" aria-label="IMOEXF">
      ${GRID_X.map((x) => svg`<path class="grid" d="M${x + 0.5} 90V678"/>`)}
      ${GRID_Y.map((y) => svg`<path class="grid" d="M79 ${y + 0.5}H1839"/>`)}
      ${PROFILE.map(([total, buy], k) => {
        const y = 149 + k * 4.813;
        const t = total / 2.376;
        const b = buy / 2.376;
        return svg`<g class=${k < 21 || k > 62 ? "shape faded" : "shape"}>
          <rect class="sell" x=${1839 - t} y=${y} width=${t - b} height="3.600"/>
          <rect class="buy" x=${1839 - b} y=${y} width=${b} height="3.600"/></g>`;
      })}
      ${VOLUME.map((h, k) => {
        const c = CANDLES[k];
        return svg`<rect class=${c.up ? "shape vup" : "shape vdn"} x=${c.x - 1} y=${678 - h} width="2" height=${h}/>`;
      })}
      <rect class="measure" x="696" y="367" width="468.500" height="260"/>
      ${LEVELS.map((y) => svg`<path class="level" d="M79 ${y + 0.5}H1839"/>`)}
      <path class="last-price" d="M79 622.500H1839"/>
      <polyline class="ma" points=${join(MA_LINE)}/>
      ${CANDLES.map((c) => svg`
        <path class=${c.up ? "gup" : "gdn"} d="M${c.x} ${c.hi}V${c.lo}"/>
        <rect class=${c.up ? "bup" : "bdn"} x=${c.x - 1.1} y=${c.top} width="2.200" height=${Math.max(1, c.bottom - c.top)}/>`)}
      <path class="poc" d="M79 281.500H1839"/>
      <path class="mline" d="M929.500 367V600M696 497.500H1164M1156.500 491.500l7.500 6-7.500 6"/>
    </svg>`;
  }

  private macdSvg() {
    return html`<svg viewBox="${PLOT_X} ${MACD_Y} ${PLOT_W} ${MACD_H}" preserveAspectRatio="none" aria-label="MACD">
      ${GRID_X.map((x) => svg`<path class="grid" d="M${x + 0.5} 679V778"/>`)}
      <path class="grid" d="M79 766.500H1839"/>
      ${CANDLES.map((c) => {
        const d = at(SIGNAL_LINE, c.x) - at(MACD_LINE, c.x);
        const h = Math.max(1.2, Math.abs(d));
        return svg`<rect class="shape" fill=${d >= 0 ? "#2f7a5c" : "#973444"} x=${c.x - 0.7} y=${d >= 0 ? 726 - h : 726} width="1.500" height=${h}/>`;
      })}
      <polyline class="macd" points=${join(MACD_LINE)}/>
      <polyline class="signal" points=${join(SIGNAL_LINE)}/>
    </svg>`;
  }

  private rsiSvg() {
    return html`<svg viewBox="${PLOT_X} ${RSI_Y} ${PLOT_W} ${RSI_H}" preserveAspectRatio="none" aria-label="RSI">
      <rect class="band" x="79" y="790" width="1760" height="80"/>
      ${GRID_X.map((x) => svg`<path class="grid" d="M${x + 0.5} 779V790M${x + 0.5} 870V894"/>`)}
      ${[790, 830, 870].map((y) => svg`<path class="dash" d="M79 ${y + 0.5}H1839"/>`)}
      <polyline class="rsi" points=${join(RSI_LINE)}/>
    </svg>`;
  }

  private tags(list: Tag[], from: number, size: number) {
    return list.map((t) => html`<span class="tag ${t.kind}" style="top:${pct(t.y, from, size)}">${t.text}</span>`);
  }

  private toolButton(label: string, icon: unknown, cls = "") {
    return html`<button class=${cls || nothing} aria-label=${label}>${tool(icon)}</button>`;
  }

  render() {
    return html`
      <section class="window">
        <header class="head">
          <span class="dot"></span><span class="rule"></span>
          <button class="symbol">${I.search}IMOEXF</button>
          <div class="winbtns">
            <button class="tab" aria-label="Свернуть">${I.up}</button>
            <button class="framed" aria-label="Окно">${I.windows}</button>
            <button class="plain" aria-label="Настройки">${I.gear}</button>
            <button class="plain" aria-label="Закрыть">${I.close}</button>
          </div>
        </header>

        <nav class="toolbar">
          <button class="sq on" aria-label="Рисование">${I.pencil}</button>
          <span class="sep"></span>
          ${["5М", "15М", "1Ч", "4Ч", "Д", "Н", "Мес"].map(
            (t) => html`<button class="txt ${t === "Д" ? "on" : ""}">${t}</button>`
          )}
          <button class="sq" aria-label="Интервалы">${I.down}</button>
          <span class="sep"></span>
          <button class="sq on" aria-label="Свечи">${I.candles}</button>
          <button class="sq" aria-label="Область">${I.area}</button>
          <button class="sq" aria-label="Тип графика">${I.down}</button>
          <span class="sep"></span>
          <button class="sq dim" aria-label="Заявка">${I.cart}</button>
          <span class="sep"></span>
          <button class="fx">${I.fx}Индикаторы</button>
          <span class="sep"></span>
          <button class="sq" aria-label="Сравнить">${I.plus}</button>
          <span class="sep"></span>
          <button class="sq" aria-label="Шаблоны">${I.grid}</button>
          <span class="sep"></span>
          <button class="sq" aria-label="Отменить">${I.undo}</button>
          <button class="sq dim gap" aria-label="Повторить">${I.redo}</button>
          <button class="sq last" aria-label="Снимок">${I.camera}</button>
        </nav>

        <div class="main">
          <aside class="tools">
            ${this.toolButton("Перекрестие", T.cross)}
            ${this.toolButton("Линия", T.line)}
            ${this.toolButton("Фибоначчи", T.fib)}
            ${this.toolButton("Паттерны", T.pattern)}
            ${this.toolButton("Прогноз", T.forecast)}
            ${this.toolButton("Кисть", T.brush)}
            ${this.toolButton("Текст", T.text)}
            <hr />
            ${this.toolButton("Линейка", T.ruler)}
            ${this.toolButton("Увеличить", T.zoom)}
            <hr />
            ${this.toolButton("Магнит", T.magnet, "on")}
            ${this.toolButton("Режим рисования", T.pencilLock)}
            ${this.toolButton("Закрепить", T.lock)}
            ${this.toolButton("Скрыть", T.eye)}
            <hr />
            ${this.toolButton("Удалить", T.trash)}
            ${this.toolButton("Слои", T.layers, "bottom")}
          </aside>

          <div class="pane">
            ${this.priceSvg()}
            <div class="bubble" style="left:${pct(930, PLOT_X, PLOT_W)};top:${pct(585, PRICE_Y, PRICE_H)}">
              <div>−277.0 (−10.32%) , −554</div>
              <div>Бары: 138, 145д 5ч</div>
              <div>Объем 11.828M</div>
            </div>
          </div>
          <div class="axis">
            <div class="range" style="top:${pct(367, PRICE_Y, PRICE_H)};height:${pct(260, 0, PRICE_H)}"></div>
            ${this.tags(TICKS, PRICE_Y, PRICE_H)} ${this.tags(PRICE_TAGS, PRICE_Y, PRICE_H)}
          </div>

          <div class="pane">
            ${this.macdSvg()}
            <div class="legend">
              <span class="name">MACD12 26 close 9</span><span class="c-red">−8.5</span><span class="c-blue">−41.7</span><span class="c-orange">−33.1</span>
            </div>
          </div>
          <div class="axis">${this.tags(MACD_TAGS, MACD_Y, MACD_H)}</div>

          <div class="pane">
            ${this.rsiSvg()}
            <div class="legend rsi-legend"><span class="name">RSI14</span><span class="c-sky">23.75</span></div>
          </div>
          <div class="axis">${this.tags(RSI_TAGS, RSI_Y, RSI_H)}</div>

          <div class="times">
            <div class="span" style="left:${pct(696, PLOT_X, PLOT_W)};width:${pct(469, 0, PLOT_W)}"></div>
            ${TIMES.map(
              (t) => html`<span class="time ${t.bold ? "bold" : ""} ${t.chip ? "chip" : ""}" style="left:${pct(t.x, PLOT_X, PLOT_W)}">${t.text}</span>`
            )}
          </div>
          <button class="corner" aria-label="Настройки шкалы">${I.hex}</button>
        </div>
      </section>

      <footer class="status">
        ${I.wifi}<span class="rule"></span><span class="clock">08:29:01</span><span class="rule"></span>
        <a href="#">${I.tv}График IMOEXF от TradingView</a>
        <div class="right">
          <a class="ipo" href="#">${I.bolt}IPO, SPO<span class="pill">Новое</span></a>
          <a href="#">${I.cup}Турниры</a>
          <a href="#">${I.info}Список изменений</a>
          <a href="#">${I.help}Помощь</a>
        </div>
      </footer>
    `;
  }
}
